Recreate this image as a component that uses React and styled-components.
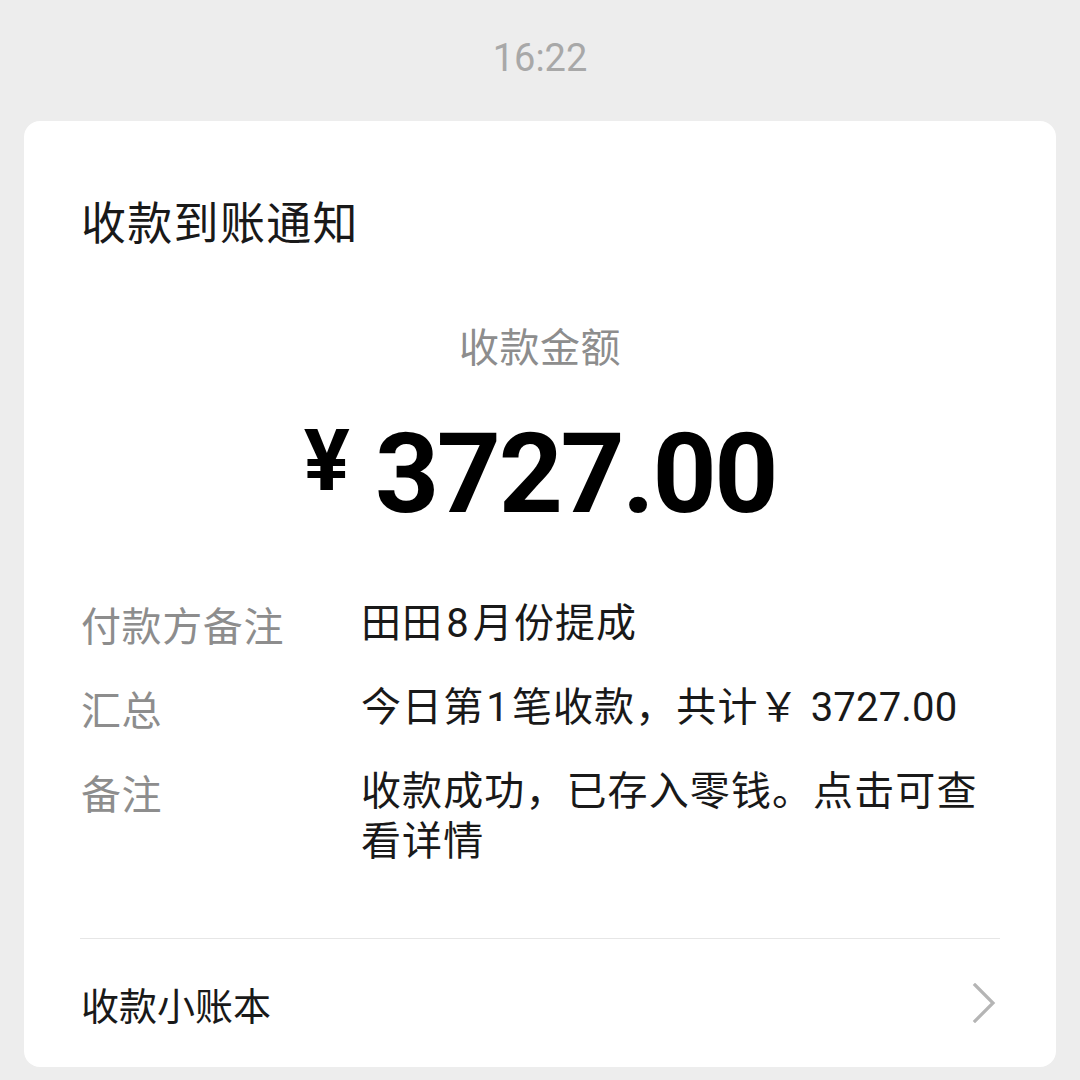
import React from "react";
import styled, { createGlobalStyle } from "styled-components";

const GlobalStyle = createGlobalStyle`
  html, body {
    margin: 0;
    padding: 0;
    background: #ededed;
  }
  body {
    width: 1080px;
    min-height: 1080px;
    font-family: "Roboto", "Noto Sans CJK SC", sans-serif;
    -webkit-font-smoothing: antialiased;
  }
`;

const Page = styled.div`
  width: 1080px;
  height: 1080px;
  background: #ededed;
  display: flex;
  flex-direction: column;
  overflow: hidden;
`;

const TimeBar = styled.div`
  height: 121px;
  padding-bottom: 6px;
  box-sizing: border-box;
  display: flex;
  align-items: center;
  justify-content: center;
  font-family: "Roboto", sans-serif;
  font-size: 38px;
  color: #a8a8a8;
`;

const Card = styled.div`
  margin: 0 24px;
  background: #ffffff;
  border-radius: 16px;
  padding: 70px 56px 0;
  display: flex;
  flex-direction: column;
`;

const Title = styled.div`
  font-family: "Noto Sans CJK SC", sans-serif;
  font-size: 45px;
  line-height: 60px;
  letter-spacing: 1.3px;
  color: #191919;
  padding-left: 1px;
`;

const AmountLabel = styled.div`
  margin-top: 66px;
  text-align: center;
  font-family: "Noto Sans CJK SC", sans-serif;
  font-size: 40px;
  line-height: 56px;
  letter-spacing: 0.5px;
  color: #8d8d8d;
`;

const AmountRow = styled.div`
  margin-top: 45px;
  display: flex;
  justify-content: center;
  align-items: flex-start;
  gap: 25px;
  color: #000;
  font-family: "Roboto", sans-serif;
  font-weight: 700;
`;

const Yen = styled.span`
  font-size: 86px;
  line-height: 1;
`;

const Amount = styled.span`
  font-size: 112px;
  line-height: 1;
  letter-spacing: -2.4px;
`;

const Details = styled.div`
  margin-top: 69px;
  display: flex;
  flex-direction: column;
  gap: 34px;
`;

const Row = styled.div`
  display: grid;
  grid-template-columns: 281px 1fr;
  font-size: 40px;
  line-height: 50px;
  letter-spacing: 0.6px;
`;

const Label = styled.div`
  font-family: "Noto Sans CJK SC", sans-serif;
  color: #8d8d8d;
  padding-left: 1px;
`;

const Value = styled.div`
  font-family: "Roboto", "Noto Sans CJK SC", sans-serif;
  color: #191919;
  letter-spacing: 1.1px;
`;

const Num = styled.span`
  margin: 0 ${(p) => p.$space}px;
  letter-spacing: ${(p) => (p.$tight ? "0.2px" : "inherit")};
`;

const Divider = styled.div`
  margin-top: 71px;
  height: 1px;
  background: #e6e6e6;
`;

const Footer = styled.div`
  height: 128px;
  display: flex;
  align-items: center;
  justify-content: space-between;
`;

const FooterText = styled.div`
  font-family: "Noto Sans CJK SC", sans-serif;
  font-size: 38px;
  color: #191919;
  padding-left: 1px;
`;

const Chevron = styled.svg`
  width: 24px;
  height: 40px;
  margin-right: 4px;
`;

const rows = [
  { label: "付款方备注", value: <>田田<Num $space={3}>8</Num>月份提成</> },
  {
    label: "汇总",
    value: (
      <>
        今日第<Num $space={2}>1</Num>笔收款，共计￥ <Num $space={0} $tight>3727.00</Num>
      </>
    ),
  },
  { label: "备注", value: "收款成功，已存入零钱。点击可查看详情" },
];

export default function App() {
  return (
    <>
      <GlobalStyle />
      <Page>
        <TimeBar>16:22</TimeBar>
        <Card>
          <Title>收款到账通知</Title>
          <AmountLabel>收款金额</AmountLabel>
          <AmountRow>
            <Yen>¥</Yen>
            <Amount>3727.00</Amount>
          </AmountRow>
          <Details>
            {rows.map((r) => (
              <Row key={r.label}>
                <Label>{r.label}</Label>
                <Value>{r.value}</Value>
              </Row>
            ))}
          </Details>
          <Divider />
          <Footer>
            <FooterText>收款小账本</FooterText>
            <Chevron viewBox="0 0 24 40">
              <polyline
                points="3,2 21,20 3,38"
                fill="none"
                stroke="#b5b5b5"
                strokeWidth="3.2"
                strokeLinecap="square"
                strokeLinejoin="miter"
              />
            </Chevron>
          </Footer>
        </Card>
      </Page>
    </>
  );
}
